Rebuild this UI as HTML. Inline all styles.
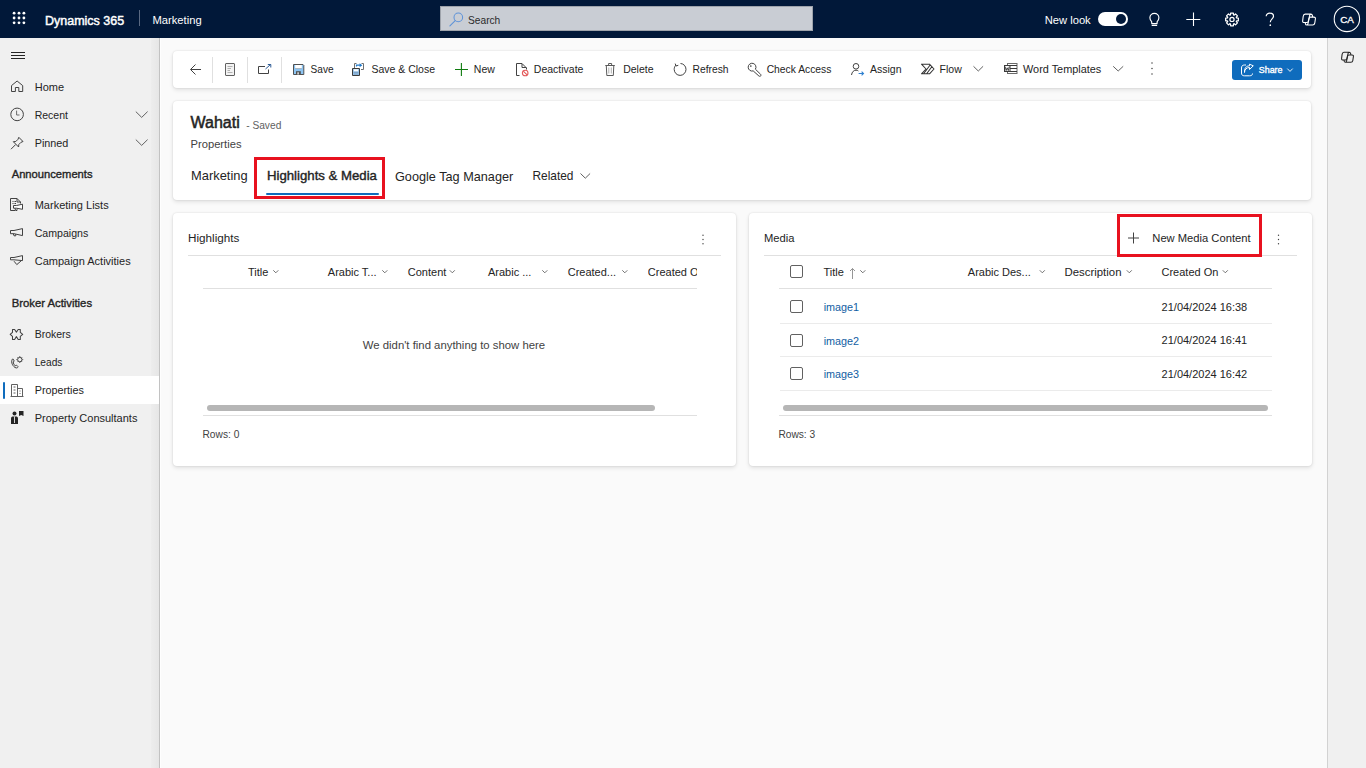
<!DOCTYPE html>
<html><head><meta charset="utf-8"><title>Wahati - Properties</title>
<style>
html,body{margin:0;padding:0;width:1366px;height:768px;overflow:hidden;background:#fafafa}
body{position:relative;font-family:"Liberation Sans",sans-serif}
.t{position:absolute;white-space:nowrap;line-height:1}
</style></head><body>
<div style="position:absolute;left:0px;top:0px;width:1366px;height:38px;background:#011839"></div>
<div style="position:absolute;left:0px;top:38px;width:159px;height:730px;background:#f0f0f0"></div>
<div style="position:absolute;left:151px;top:38px;width:8px;height:730px;background:linear-gradient(90deg,#ededed,#e6e6e6)"></div>
<div style="position:absolute;left:159px;top:38px;width:1px;height:730px;background:#c2c2c2"></div>
<div style="position:absolute;left:160px;top:38px;width:1px;height:730px;background:#fefefe"></div>
<div style="position:absolute;left:161px;top:38px;width:1166px;height:730px;background:#fafafa"></div>
<div style="position:absolute;left:1327px;top:38px;width:1px;height:730px;background:#d2d2d2"></div>
<div style="position:absolute;left:1328px;top:38px;width:38px;height:730px;background:#f0f0f0"></div>
<div class="t" style="left:45px;top:15.02px;font-size:12.5px;color:#fff;font-weight:400;-webkit-text-stroke:0.45px #fff;">Dynamics 365</div>
<div style="position:absolute;left:139px;top:10px;width:1px;height:16px;background:#5a6982"></div>
<div class="t" style="left:152.5px;top:15.12px;font-size:11.2px;color:#fff;font-weight:400;">Marketing</div>
<div style="position:absolute;left:440px;top:6px;width:373px;height:25px;background:#c9cdd4;border:1px solid #9ea3ab;box-sizing:border-box"></div>
<div class="t" style="left:468px;top:16.17px;font-size:10.2px;color:#2b2b2b;font-weight:400;">Search</div>
<div class="t" style="left:1044.7px;top:15.12px;font-size:11.2px;color:#fff;font-weight:400;">New look</div>
<div style="position:absolute;left:1098px;top:12px;width:30px;height:14px;background:#fff;border-radius:7px"></div>
<div style="position:absolute;left:1116px;top:14px;width:10px;height:10px;background:#011839;border-radius:50%"></div>
<div class="t" style="left:1340.3px;top:15px;font-size:9.9px;color:#fff;font-weight:400;-webkit-text-stroke:0.3px #fff;letter-spacing:-0.3px;">CA</div>
<div class="t" style="left:34.7px;top:82px;font-size:11px;color:#242424;font-weight:400;">Home</div>
<div class="t" style="left:34.7px;top:110px;font-size:10.5px;color:#242424;font-weight:400;">Recent</div>
<div class="t" style="left:34.7px;top:138px;font-size:10.8px;color:#242424;font-weight:400;">Pinned</div>
<div class="t" style="left:11.7px;top:168.72px;font-size:11.2px;color:#242424;font-weight:400;-webkit-text-stroke:0.35px #242424;">Announcements</div>
<div class="t" style="left:34.7px;top:200px;font-size:11px;color:#242424;font-weight:400;">Marketing Lists</div>
<div class="t" style="left:34.7px;top:228px;font-size:10.6px;color:#242424;font-weight:400;">Campaigns</div>
<div class="t" style="left:34.7px;top:256px;font-size:11px;color:#242424;font-weight:400;">Campaign Activities</div>
<div class="t" style="left:11.7px;top:297.63px;font-size:11.3px;color:#242424;font-weight:400;-webkit-text-stroke:0.35px #242424;">Broker Activities</div>
<div class="t" style="left:34.7px;top:329px;font-size:10.5px;color:#242424;font-weight:400;">Brokers</div>
<div class="t" style="left:34.7px;top:358px;font-size:10.2px;color:#242424;font-weight:400;">Leads</div>
<div style="position:absolute;left:0px;top:376px;width:159px;height:28px;background:#fff"></div>
<div style="position:absolute;left:3px;top:381.5px;width:2px;height:17px;background:#0f6cbd;border-radius:1px"></div>
<div class="t" style="left:34.7px;top:385px;font-size:10.8px;color:#242424;font-weight:400;">Properties</div>
<div class="t" style="left:34.7px;top:413px;font-size:11px;color:#242424;font-weight:400;">Property Consultants</div>
<div style="position:absolute;left:173px;top:51px;width:1138px;height:37px;background:#fff;border-radius:4px;box-shadow:0 0 2px rgba(0,0,0,0.12),0 2px 4px rgba(0,0,0,0.10)"></div>
<div style="position:absolute;left:173px;top:101px;width:1138px;height:99px;background:#fff;border-radius:4px;box-shadow:0 0 2px rgba(0,0,0,0.12),0 2px 4px rgba(0,0,0,0.10)"></div>
<div style="position:absolute;left:173px;top:213px;width:563px;height:253px;background:#fff;border-radius:4px;box-shadow:0 0 2px rgba(0,0,0,0.12),0 2px 4px rgba(0,0,0,0.10)"></div>
<div style="position:absolute;left:749px;top:213px;width:563px;height:253px;background:#fff;border-radius:4px;box-shadow:0 0 2px rgba(0,0,0,0.12),0 2px 4px rgba(0,0,0,0.10)"></div>
<div style="position:absolute;left:212px;top:57px;width:1px;height:26px;background:#e0e0e0"></div>
<div style="position:absolute;left:247px;top:57px;width:1px;height:26px;background:#e0e0e0"></div>
<div style="position:absolute;left:281px;top:57px;width:1px;height:26px;background:#e0e0e0"></div>
<div class="t" style="left:310.6px;top:64.95px;font-size:10.1px;color:#242424;font-weight:400;">Save</div>
<div class="t" style="left:371.4px;top:63.91px;font-size:10.5px;color:#242424;font-weight:400;">Save &amp; Close</div>
<div class="t" style="left:473.8px;top:63.91px;font-size:10.5px;color:#242424;font-weight:400;">New</div>
<div class="t" style="left:533.8px;top:63.91px;font-size:10.5px;color:#242424;font-weight:400;">Deactivate</div>
<div class="t" style="left:623.2px;top:63.91px;font-size:10.5px;color:#242424;font-weight:400;">Delete</div>
<div class="t" style="left:692.5px;top:64.78px;font-size:10.3px;color:#242424;font-weight:400;">Refresh</div>
<div class="t" style="left:766.7px;top:64.78px;font-size:10.3px;color:#242424;font-weight:400;">Check Access</div>
<div class="t" style="left:870px;top:63.91px;font-size:10.5px;color:#242424;font-weight:400;">Assign</div>
<div class="t" style="left:939.6px;top:63.91px;font-size:10.5px;color:#242424;font-weight:400;">Flow</div>
<div class="t" style="left:1023px;top:63.57px;font-size:10.9px;color:#242424;font-weight:400;">Word Templates</div>
<div style="position:absolute;left:1232px;top:60px;width:70px;height:20px;background:#0f6cbd;border-radius:3px"></div>
<div class="t" style="left:1258.8px;top:65.67px;font-size:8.9px;color:#fff;font-weight:400;-webkit-text-stroke:0.35px #fff;">Share</div>
<div class="t" style="left:190.5px;top:115.16px;font-size:16px;color:#242424;font-weight:400;-webkit-text-stroke:0.5px #242424;">Wahati</div>
<div class="t" style="left:246.2px;top:121.07px;font-size:10.2px;color:#616161;font-weight:400;">- Saved</div>
<div class="t" style="left:190.5px;top:139.22px;font-size:11.2px;color:#424242;font-weight:400;">Properties</div>
<div class="t" style="left:191px;top:170.38px;font-size:12.9px;color:#242424;font-weight:400;">Marketing</div>
<div class="t" style="left:267px;top:169.13px;font-size:13.2px;color:#242424;font-weight:400;-webkit-text-stroke:0.4px #242424;">Highlights &amp; Media</div>
<div class="t" style="left:395px;top:170.55px;font-size:12.7px;color:#242424;font-weight:400;">Google Tag Manager</div>
<div class="t" style="left:532.5px;top:171.23px;font-size:11.9px;color:#242424;font-weight:400;">Related</div>
<div style="position:absolute;left:266px;top:193px;width:113px;height:2px;background:#0f6cbd;border-radius:1px"></div>
<div class="t" style="left:188px;top:232.40px;font-size:11.7px;color:#242424;font-weight:400;">Highlights</div>
<div style="position:absolute;left:188px;top:255px;width:533px;height:1px;background:#e0e0e0"></div>
<div class="t" style="left:247.9px;top:267.29px;font-size:11px;color:#242424;font-weight:400;">Title</div>
<div class="t" style="left:327.8px;top:267.29px;font-size:11px;color:#242424;font-weight:400;">Arabic T...</div>
<div class="t" style="left:407.8px;top:267.29px;font-size:11px;color:#242424;font-weight:400;">Content</div>
<div class="t" style="left:488px;top:267.29px;font-size:11px;color:#242424;font-weight:400;">Arabic ...</div>
<div class="t" style="left:567.7px;top:267.29px;font-size:11px;color:#242424;font-weight:400;">Created...</div>
<div style="position:absolute;left:647.8px;top:260px;width:49.5px;height:24px;overflow:hidden">
<div class="t" style="left:0px;top:7.29px;font-size:11px;color:#242424;font-weight:400;">Created On</div>
</div>
<div style="position:absolute;left:203px;top:288px;width:494px;height:1px;background:#e0e0e0"></div>
<div class="t" style="left:362.8px;top:339.59px;font-size:11.35px;color:#424242;font-weight:400;">We didn't find anything to show here</div>
<div style="position:absolute;left:207px;top:405px;width:448px;height:6px;background:#b6b6b6;border-radius:3px"></div>
<div style="position:absolute;left:203px;top:415px;width:494px;height:1px;background:#e0e0e0"></div>
<div class="t" style="left:202.5px;top:429.57px;font-size:10.2px;color:#424242;font-weight:400;">Rows: 0</div>
<div class="t" style="left:764px;top:232.82px;font-size:11.2px;color:#242424;font-weight:400;">Media</div>
<div class="t" style="left:1152.3px;top:232.92px;font-size:11.2px;color:#242424;font-weight:400;">New Media Content</div>
<div style="position:absolute;left:764px;top:255px;width:533px;height:1px;background:#e0e0e0"></div>
<div style="position:absolute;left:790px;top:265px;width:13px;height:13px;border:1px solid #616161;border-radius:2px;box-sizing:border-box;background:#fff"></div>
<div class="t" style="left:823.5px;top:267.29px;font-size:11px;color:#242424;font-weight:400;">Title</div>
<div class="t" style="left:967.8px;top:267.29px;font-size:11px;color:#242424;font-weight:400;">Arabic Des...</div>
<div class="t" style="left:1064.5px;top:266.95px;font-size:11.4px;color:#242424;font-weight:400;">Description</div>
<div class="t" style="left:1161.5px;top:267.29px;font-size:11px;color:#242424;font-weight:400;">Created On</div>
<div style="position:absolute;left:779px;top:288px;width:493px;height:1px;background:#e0e0e0"></div>
<div style="position:absolute;left:790px;top:300px;width:13px;height:13px;border:1px solid #616161;border-radius:2px;box-sizing:border-box;background:#fff"></div>
<div class="t" style="left:823.7px;top:302.06px;font-size:10.8px;color:#115ea3;font-weight:400;">image1</div>
<div class="t" style="left:1161.6px;top:301.89px;font-size:11px;color:#242424;font-weight:400;">21/04/2024 16:38</div>
<div style="position:absolute;left:780px;top:323px;width:492px;height:1px;background:#ebebeb"></div>
<div style="position:absolute;left:790px;top:334px;width:13px;height:13px;border:1px solid #616161;border-radius:2px;box-sizing:border-box;background:#fff"></div>
<div class="t" style="left:823.7px;top:335.66px;font-size:10.8px;color:#115ea3;font-weight:400;">image2</div>
<div class="t" style="left:1161.6px;top:335.49px;font-size:11px;color:#242424;font-weight:400;">21/04/2024 16:41</div>
<div style="position:absolute;left:780px;top:356px;width:492px;height:1px;background:#ebebeb"></div>
<div style="position:absolute;left:790px;top:367px;width:13px;height:13px;border:1px solid #616161;border-radius:2px;box-sizing:border-box;background:#fff"></div>
<div class="t" style="left:823.7px;top:369.16px;font-size:10.8px;color:#115ea3;font-weight:400;">image3</div>
<div class="t" style="left:1161.6px;top:368.99px;font-size:11px;color:#242424;font-weight:400;">21/04/2024 16:42</div>
<div style="position:absolute;left:780px;top:390px;width:492px;height:1px;background:#ebebeb"></div>
<div style="position:absolute;left:783px;top:405px;width:485px;height:6px;background:#b6b6b6;border-radius:3px"></div>
<div style="position:absolute;left:779px;top:415px;width:493px;height:1px;background:#e0e0e0"></div>
<div class="t" style="left:778.4px;top:429.57px;font-size:10.2px;color:#424242;font-weight:400;">Rows: 3</div>
<svg style="position:absolute;left:0;top:0" width="1366" height="768" viewBox="0 0 1366 768"><circle cx="14.1" cy="13.2" r="1.4" stroke="none" stroke-width="0" fill="#fff"/><circle cx="14.1" cy="18.0" r="1.4" stroke="none" stroke-width="0" fill="#fff"/><circle cx="14.1" cy="22.8" r="1.4" stroke="none" stroke-width="0" fill="#fff"/><circle cx="19.0" cy="13.2" r="1.4" stroke="none" stroke-width="0" fill="#fff"/><circle cx="19.0" cy="18.0" r="1.4" stroke="none" stroke-width="0" fill="#fff"/><circle cx="19.0" cy="22.8" r="1.4" stroke="none" stroke-width="0" fill="#fff"/><circle cx="23.9" cy="13.2" r="1.4" stroke="none" stroke-width="0" fill="#fff"/><circle cx="23.9" cy="18.0" r="1.4" stroke="none" stroke-width="0" fill="#fff"/><circle cx="23.9" cy="22.8" r="1.4" stroke="none" stroke-width="0" fill="#fff"/><circle cx="458.3" cy="17.4" r="4.3" stroke="#5f93d8" stroke-width="1.05" fill="none"/><path d="M455.2 20.6 L449.9 25.8" stroke="#5f93d8" stroke-width="1.1" fill="none" stroke-linecap="round"/><path d="M1151.6 21.6 C1150.4 20.4 1149.9 19.2 1149.9 17.8 C1149.9 15.2 1151.9 13.4 1154.4 13.4 C1156.9 13.4 1158.9 15.2 1158.9 17.8 C1158.9 19.2 1158.4 20.4 1157.2 21.6 L1157 23.6 H1151.8 Z" stroke="#fff" stroke-width="1.15" fill="none" /><path d="M1152.2 25.4 H1156.6" stroke="#fff" stroke-width="1.2" fill="none" stroke-linecap="round"/><path d="M1193.5 12.6 V26 M1186.3 19.5 H1200.3" stroke="#fff" stroke-width="1.1" fill="none" /><polygon points="1236.57,17.92 1238.35,18.01 1238.35,20.79 1236.57,20.88 1236.28,21.58 1237.47,22.90 1235.50,24.87 1234.18,23.68 1233.48,23.97 1233.39,25.75 1230.61,25.75 1230.52,23.97 1229.82,23.68 1228.50,24.87 1226.53,22.90 1227.72,21.58 1227.43,20.88 1225.65,20.79 1225.65,18.01 1227.43,17.92 1227.72,17.22 1226.53,15.90 1228.50,13.93 1229.82,15.12 1230.52,14.83 1230.61,13.05 1233.39,13.05 1233.48,14.83 1234.18,15.12 1235.50,13.93 1237.47,15.90 1236.28,17.22" stroke="#fff" stroke-width="1.25" fill="none" stroke-linejoin="round"/><circle cx="1232" cy="19.4" r="2.1" stroke="#fff" stroke-width="1.2" fill="none"/><path d="M1266.2 16.2 C1266.2 14.2 1267.8 13.2 1269.9 13.2 C1272.1 13.2 1273.5 14.5 1273.5 16.3 C1273.5 18.6 1270.3 19.2 1270.3 22.2" stroke="#fff" stroke-width="1.2" fill="none" /><circle cx="1270.3" cy="25.2" r="0.85" stroke="none" stroke-width="0" fill="#fff"/><path d="M1305.13 14.15 L1310.96 14.15 Q1312.04 14.15 1312.37 15.44 L1312.69 17.06 M1310.96 14.15 Q1309.99 14.26 1309.67 15.44 L1308.26 21.28 Q1307.94 22.57 1306.64 22.57 L1304.16 22.57 Q1302.43 22.57 1302.65 20.84 L1303.19 16.52 Q1303.51 14.15 1305.13 14.15 Z" stroke="#fff" stroke-width="1.1" fill="none" stroke-linejoin="round"/><path d="M1310.21 17.17 L1313.88 17.17 Q1315.72 17.17 1315.39 19.01 L1314.74 23.22 Q1314.42 24.95 1312.69 24.95 L1306.75 24.95 Q1305.56 24.95 1305.46 23.87 L1305.24 22.57 M1310.21 17.17 Q1309.34 17.28 1309.13 18.36 L1308.05 23.44 Q1307.72 24.84 1306.75 24.95" stroke="#fff" stroke-width="1.1" fill="none" stroke-linejoin="round"/><circle cx="1346.9" cy="18.9" r="12.7" stroke="#fff" stroke-width="1.05" fill="none"/><path d="M11 52.5 H25 M11 55.5 H25 M11 58.5 H25" stroke="#242424" stroke-width="1" fill="none" /><path d="M11.5 91.5 V85.6 L17.1 81 L22.7 85.6 V91.5 H18.8 V87.5 H15.4 V91.5 Z" stroke="#424242" stroke-width="1" fill="none" stroke-linejoin="round"/><path d="M135.8 111.6 L141.7 117.4 L147.6 111.6" stroke="#616161" stroke-width="1" fill="none" /><circle cx="17.1" cy="114.4" r="6.3" stroke="#424242" stroke-width="1" fill="none"/><path d="M16.6 110.6 V115 H19.5" stroke="#6a6a6a" stroke-width="1" fill="none" /><path d="M135.8 139.6 L141.7 145.4 L147.6 139.6" stroke="#616161" stroke-width="1" fill="none" /><path d="M18.8 137.3 L23 141.5 L21 142.3 L18.8 144.5 L18.6 147 L13.3 141.7 L15.8 141.5 L18 139.3 Z M15.6 144.6 L11 149.2" stroke="#424242" stroke-width="1" fill="none" stroke-linejoin="round"/><path d="M15 210.5 H10.5 V198.5 H17 L20.5 202 V203.5 M17 198.5 V202 H20.5 M12.5 201.5 H13.5 M14.5 201.5 H16 M12.5 203.5 H13.5 M14.5 203.5 H16" stroke="#424242" stroke-width="1" fill="none" /><path d="M13.5 205.5 H16.5 L22.5 204.2 V209.3 L16.5 208.2 H13.5 Z M15 208.3 L15.6 210.5 H17 L17 208.5" stroke="#424242" stroke-width="1" fill="#fff" stroke-linejoin="round"/><path d="M10.5 230.5 H14 L22.5 228.6 V235.6 L14 233.7 H10.5 Z M13.3 233.9 L14 235.8 H15.8 L15.6 234.2" stroke="#424242" stroke-width="1" fill="none" stroke-linejoin="round"/><path d="M10.5 257.5 H14 L22.5 255.6 V260.6 L14 259.8 H10.5 Z M14 261.2 L16.8 264.6 L22.6 259.6" stroke="#424242" stroke-width="1" fill="none" stroke-linejoin="round"/><path d="M12.5 329.5 H14.6 L16.4 332.1 L18.2 329.5 H20.3 V332.3 L22.7 334.4 L20.3 336.4 V339.5 H18.2 L16.4 336.6 L14.6 339.5 H12.5 V336.4 L10.2 334.4 L12.5 332.3 Z" stroke="#424242" stroke-width="1.05" fill="none" stroke-linejoin="round"/><path d="M12.5 359 C11 361 11.5 365 15 367.5 C17 368.5 18 367.6 18 366.6 L16.6 365.2 L15.2 365.8 C14 364.8 13.3 363.4 13.3 362 L14.2 361 L13.3 359.2 Z" stroke="#424242" stroke-width="1" fill="none" /><circle cx="19.8" cy="359.6" r="2.2" stroke="#424242" stroke-width="1" fill="none"/><path d="M19.8 356.2 V357 M19.8 362.2 V363 M16.4 359.6 H17.2 M22.4 359.6 H23.2 M17.4 357.2 L18 357.8 M21.6 361.4 L22.2 362 M22.2 357.2 L21.6 357.8 M18 361.4 L17.4 362" stroke="#424242" stroke-width="1" fill="none" /><path d="M11.5 396.5 V384.5 H17.5 V396.5 M17.5 388.5 H22.5 V396.5 M10.5 396.5 H23.5 M13.5 387 H15.5 M13.5 390 H15.5 M13.5 393 H15.5 M19.5 391 H20.5 M19.5 393.5 H20.5" stroke="#616161" stroke-width="1" fill="none" /><circle cx="14.5" cy="413.5" r="2" stroke="none" stroke-width="0" fill="#242424"/><path d="M11 424 V418.5 C11 417 12 416.5 13 416.5 H16 C17 416.5 18 417 18 418.5 V424 Z" stroke="none" stroke-width="0" fill="#242424" /><path d="M19 411 H23.5 V416 L21.2 415 L19 416 Z" stroke="none" stroke-width="0" fill="#242424" /><path d="M14.5 416.5 V423" stroke="#fff" stroke-width="0.8" fill="none" /><path d="M195.5 64.5 L190.5 69.5 L195.5 74.5 M190.8 69.5 H201" stroke="#424242" stroke-width="1" fill="none" /><rect x="225.5" y="63.5" width="9" height="12" rx="0.5" fill="#f3f3f3" stroke="#616161" stroke-width="1"/><path d="M227.5 66.5 H232.5 M227.5 68.5 H231 M227.5 70.5 H230 M227.5 72.5 H232.5" stroke="#a0a0a0" stroke-width="0.8" fill="none" /><path d="M265 66.5 H258.5 V73.5 H268.5 V69.5" stroke="#424242" stroke-width="1" fill="none" /><path d="M265.5 69 L270.5 64.5 M267.8 64.5 H270.8 V67.5" stroke="#2c5a95" stroke-width="1" fill="none" /><path d="M293.5 64.5 H303 L303.8 65.3 V74.5 H293.5 Z" stroke="#505050" stroke-width="1" fill="#8cc4f2" /><rect x="295.2" y="65" width="6.6" height="3.5" rx="0" fill="#fff" stroke="none" stroke-width="1"/><path d="M295.2 68.5 H301.8" stroke="#9a9a9a" stroke-width="0.6" fill="none" /><rect x="296" y="71.2" width="4.8" height="3.3" rx="0" fill="#505050" stroke="none" stroke-width="1"/><rect x="297.3" y="72.3" width="1.6" height="2.2" rx="0" fill="#dcdcdc" stroke="none" stroke-width="1"/><path d="M354.5 68 V63.5 H356.5 M361.5 63.5 H363.5 V69.5 H361" stroke="#707070" stroke-width="1" fill="none" /><path d="M356.5 66.5 V65.2 H360" stroke="#1e78c8" stroke-width="1.2" fill="none" /><path d="M359.6 63.2 L362.3 65.2 L359.6 67.2 Z" stroke="none" stroke-width="0" fill="#1e78c8" /><path d="M352.5 68.5 H359.5 V75.5 H352.5 Z" stroke="#3a3a3a" stroke-width="1" fill="#9ec9ee" /><rect x="354" y="69.3" width="4" height="2" rx="0" fill="#fff" stroke="none" stroke-width="1"/><path d="M353.5 72.3 H358.5 M353.5 74 H358.5" stroke="#6a8fb3" stroke-width="0.8" fill="none" /><path d="M461.4 63 V76 M455 69.5 H468" stroke="#107c10" stroke-width="1.1" fill="none" /><path d="M519.5 75.5 H516.5 V63.5 H522 L526.5 68 V69.5 M522 63.8 V67.5 H526.3" stroke="#424242" stroke-width="1" fill="none" stroke-linejoin="round"/><circle cx="525.2" cy="73" r="2.8" stroke="#e35a5a" stroke-width="1.1" fill="none"/><path d="M523.3 71.1 L527.1 74.9" stroke="#e35a5a" stroke-width="1.1" fill="none" /><path d="M605.3 65.5 H614.8 M608.6 65.5 V63.5 H611.6 V65.5 M606.3 65.5 L606.8 75.5 H613.3 L613.8 65.5" stroke="#5a5a5a" stroke-width="1" fill="none" /><path d="M608.8 67.5 V73.5 M611.3 67.5 V73.5" stroke="#a8a8a8" stroke-width="0.9" fill="none" /><path d="M675.8 65.3 C674.7 66.4 674.2 67.8 674.2 69.4 C674.2 72.7 676.9 75.4 680.1 75.4 C683.3 75.4 686 72.7 686 69.4 C686 66.1 683.5 63.6 680.5 63.5" stroke="#424242" stroke-width="1" fill="none" /><path d="M675.2 63.6 L676 66 L678.3 65.3" stroke="#424242" stroke-width="1" fill="none" /><path d="M755.4 69.2 A3.9 3.9 0 1 0 753.2 70.9 L758.9 76 C759.5 76.5 760.4 76.4 760.8 75.8 C761.2 75.2 761 74.6 760.5 74.2 Z" stroke="#424242" stroke-width="1" fill="none" stroke-linejoin="round"/><circle cx="750.8" cy="66" r="0.85" stroke="none" stroke-width="0" fill="#424242"/><circle cx="856" cy="66.3" r="2.8" stroke="#424242" stroke-width="1" fill="none"/><path d="M851.5 75 C852 71.8 853.8 70.2 856 70.2 C857 70.2 857.8 70.5 858.4 71" stroke="#424242" stroke-width="1" fill="none" /><path d="M858.6 73.5 H863.5 M861.6 71.6 L863.5 73.5 L861.6 75.4" stroke="#2f80d0" stroke-width="1.1" fill="none" /><path d="M921.5 64.2 H929.5 L934 69 L929.5 73.8 H921.5 L926 69 Z M923.8 73.5 L930.5 64.5 M926.8 73.5 L932.2 66.3" stroke="#333" stroke-width="1.05" fill="none" stroke-linejoin="round"/><path d="M973.5 66.3 L978.3 71 L983.1 66.3" stroke="#616161" stroke-width="1" fill="none" /><rect x="1007.5" y="63.5" width="9.5" height="10" rx="0" fill="#fff" stroke="#6a6a6a" stroke-width="1"/><path d="M1010 65.5 H1017 M1010 68.5 H1017 M1010 71.5 H1017" stroke="#3a3a3a" stroke-width="1" fill="none" /><rect x="1004.5" y="65.5" width="5.5" height="6" rx="0" fill="#fff" stroke="#3a3a3a" stroke-width="1"/><path d="M1005.2 66.6 L1006.1 70.6 L1007.2 67.8 L1008.3 70.6 L1009.2 66.6" stroke="#333" stroke-width="0.85" fill="none" /><path d="M1113.2 66.3 L1118.2 71 L1123.2 66.3" stroke="#616161" stroke-width="1" fill="none" /><circle cx="1152" cy="63" r="0.75" stroke="none" stroke-width="0" fill="#424242"/><circle cx="1152" cy="68.5" r="0.75" stroke="none" stroke-width="0" fill="#424242"/><circle cx="1152" cy="74" r="0.75" stroke="none" stroke-width="0" fill="#424242"/><path d="M1246 65 H1244.5 C1242.5 65 1241.5 66 1241.5 68 V73 C1241.5 75 1242.5 75.8 1244.5 75.8 H1249.5 C1251.5 75.8 1252.5 75 1252.5 73.5" stroke="#fff" stroke-width="1" fill="none" /><path d="M1244.5 72.5 C1244.5 69.5 1246.5 67.5 1249.5 67.5 V69.5 L1253.3 65.8 L1249.5 64.2 V65.8 C1246 65.8 1244.3 68.5 1244.5 72.5 Z" stroke="#fff" stroke-width="1" fill="none" stroke-linejoin="round"/><path d="M1287.3 68.6 L1290 71.4 L1292.7 68.6" stroke="#fff" stroke-width="0.9" fill="none" /><path d="M1343.90 52.20 L1349.30 52.20 Q1350.30 52.20 1350.60 53.40 L1350.90 54.90 M1349.30 52.20 Q1348.40 52.30 1348.10 53.40 L1346.80 58.80 Q1346.50 60.00 1345.30 60.00 L1343.00 60.00 Q1341.40 60.00 1341.60 58.40 L1342.10 54.40 Q1342.40 52.20 1343.90 52.20 Z" stroke="#242424" stroke-width="1.05" fill="none" stroke-linejoin="round"/><path d="M1348.60 55.00 L1352.00 55.00 Q1353.70 55.00 1353.40 56.70 L1352.80 60.60 Q1352.50 62.20 1350.90 62.20 L1345.40 62.20 Q1344.30 62.20 1344.20 61.20 L1344.00 60.00 M1348.60 55.00 Q1347.80 55.10 1347.60 56.10 L1346.60 60.80 Q1346.30 62.10 1345.40 62.20" stroke="#242424" stroke-width="1.05" fill="none" stroke-linejoin="round"/><path d="M580.5 173.5 L585.3 178.2 L590.1 173.5" stroke="#616161" stroke-width="1" fill="none" /><circle cx="703" cy="235.3" r="0.7" stroke="none" stroke-width="0" fill="#424242"/><circle cx="703" cy="239.5" r="0.7" stroke="none" stroke-width="0" fill="#424242"/><circle cx="703" cy="243.7" r="0.7" stroke="none" stroke-width="0" fill="#424242"/><path d="M273.3 270.3 L275.8 272.8 L278.3 270.3" stroke="#616161" stroke-width="0.9" fill="none" /><path d="M382.3 270.3 L384.8 272.8 L387.3 270.3" stroke="#616161" stroke-width="0.9" fill="none" /><path d="M449.8 270.3 L452.3 272.8 L454.8 270.3" stroke="#616161" stroke-width="0.9" fill="none" /><path d="M542.3 270.3 L544.8 272.8 L547.3 270.3" stroke="#616161" stroke-width="0.9" fill="none" /><path d="M622.3 270.3 L624.8 272.8 L627.3 270.3" stroke="#616161" stroke-width="0.9" fill="none" /><path d="M1133.5 232.5 V243.5 M1128 238 H1139" stroke="#424242" stroke-width="1" fill="none" /><circle cx="1278.5" cy="235.3" r="0.7" stroke="none" stroke-width="0" fill="#424242"/><circle cx="1278.5" cy="239.5" r="0.7" stroke="none" stroke-width="0" fill="#424242"/><circle cx="1278.5" cy="243.7" r="0.7" stroke="none" stroke-width="0" fill="#424242"/><path d="M852.5 279 V268.5 M850 271 L852.5 268.5 L855 271" stroke="#8a8a8a" stroke-width="0.9" fill="none" /><path d="M860.3 270.3 L862.8 272.8 L865.3 270.3" stroke="#616161" stroke-width="0.9" fill="none" /><path d="M1039.8 270.3 L1042.3 272.8 L1044.8 270.3" stroke="#616161" stroke-width="0.9" fill="none" /><path d="M1126.8 270.3 L1129.3 272.8 L1131.8 270.3" stroke="#616161" stroke-width="0.9" fill="none" /><path d="M1222.8 270.3 L1225.3 272.8 L1227.8 270.3" stroke="#616161" stroke-width="0.9" fill="none" /></svg>
<div style="position:absolute;left:254px;top:157px;width:131px;height:42px;border:3px solid #e8111f;box-sizing:border-box"></div>
<div style="position:absolute;left:1117px;top:214px;width:145px;height:43px;border:3px solid #e8111f;box-sizing:border-box"></div>
</body></html>
